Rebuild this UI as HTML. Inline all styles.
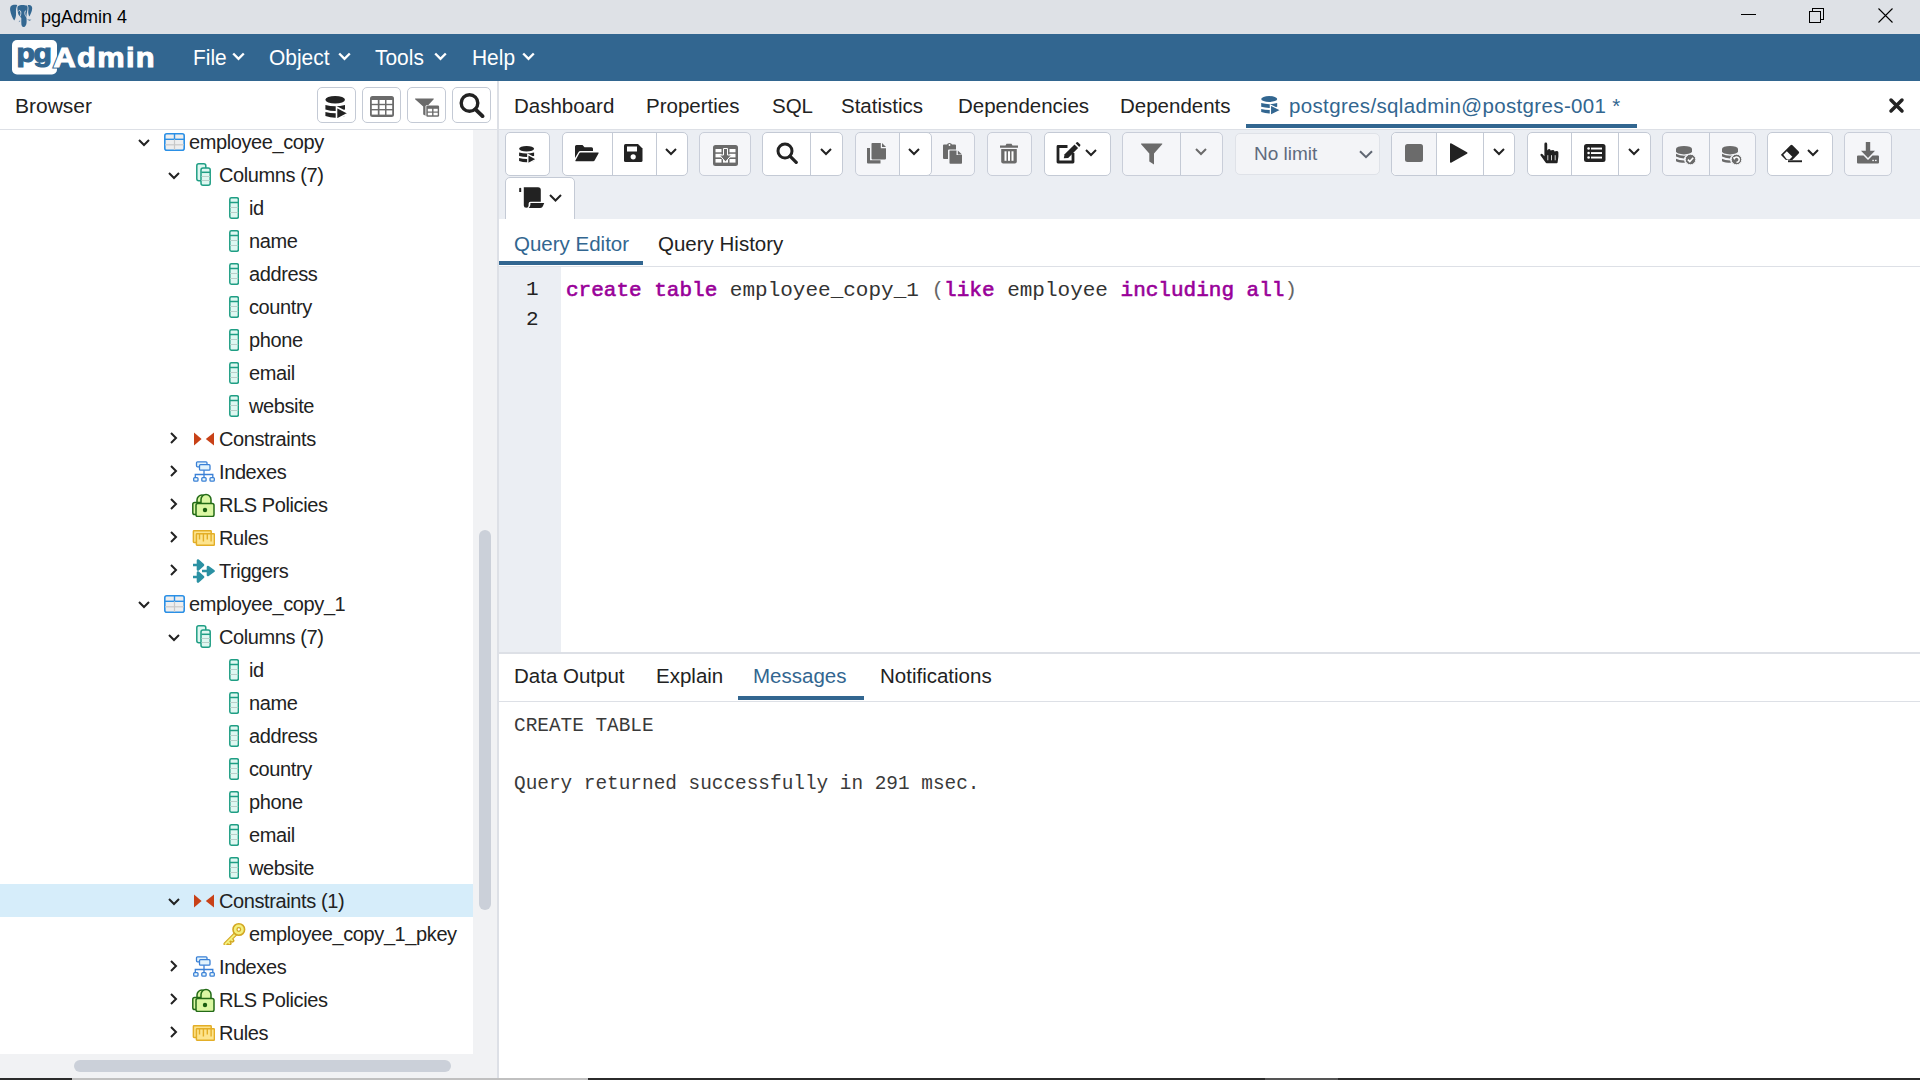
<!DOCTYPE html>
<html><head><meta charset="utf-8">
<style>
*{box-sizing:border-box;margin:0;padding:0}
html,body{width:1920px;height:1080px;overflow:hidden;background:#fff;font-family:"Liberation Sans",sans-serif;color:#222}
.a{position:absolute}
svg{display:block}
#title{left:0;top:0;width:1920px;height:34px;background:#dee1e6}
#menu{left:0;top:34px;width:1920px;height:47px;background:#326690}
.mi{top:10.5px;font-size:22.5px;color:#fff;white-space:nowrap;transform:scaleX(0.93);transform-origin:0 0}
#bhead{left:0;top:81px;width:497px;height:49px;background:#fff;border-bottom:1px solid #dde0e6}
#tree{left:0;top:130px;width:473px;height:924px;background:#fff;overflow:hidden}
#vtrack{left:473px;top:130px;width:24px;height:948px;background:#f1f2f4}
#vthumb{left:479px;top:530px;width:12px;height:380px;background:#cbd0d9;border-radius:6px}
#htrack{left:0;top:1054px;width:473px;height:24px;background:#f1f2f4}
#hthumb{left:74px;top:1060px;width:377px;height:12px;background:#cbd0d9;border-radius:6px}
#sep{left:497px;top:81px;width:2px;height:997px;background:#dde0e6}
#ptabs{left:499px;top:81px;width:1421px;height:49px;background:#fff;border-bottom:1px solid #dde0e6}
#tbar{left:499px;top:130px;width:1421px;height:89px;background:#ebeef3}
#etabs{left:499px;top:219px;width:1421px;height:48px;background:#fff;border-bottom:1px solid #dde0e6}
#gutter{left:499px;top:267px;width:62px;height:385px;background:#ebeef3}
#esplit{left:499px;top:652px;width:1421px;height:2px;background:#dde0e6}
#rtabs{left:499px;top:654px;width:1421px;height:48px;background:#fff;border-bottom:1px solid #dde0e6}
.tab{position:absolute;font-size:20.5px;white-space:nowrap;color:#222}
.btn{position:absolute;background:#fff;border:1px solid #c4cad5;border-radius:5px}
.dis{background:#f5f6f9;border-color:#c9ced9}
.dv{position:absolute;top:0;bottom:0;width:1px;background:#c4cad5}
.row{position:absolute;height:33px;white-space:nowrap;font-size:20px;color:#222;letter-spacing:-0.4px}
.bline{position:absolute;top:1078px;height:2px}
</style></head><body>
<!-- TITLE BAR -->
<div id="title" class="a">
  <svg class="a" style="left:9px;top:4px" width="24" height="24" viewBox="0 0 24 24">
    <path d="M2,2 C3.5,0.5 7,0.5 8.3,1.2 C7.3,3 6.8,5.5 7,9 C7.2,12 6.5,15 5.2,16.5 C3.5,14.5 1.8,10 1.2,6.5 C0.9,4.5 1.2,3 2,2Z" fill="#336791"/>
    <path d="M8.8,2.2 C10.5,0.6 15.5,0.6 17.8,1.6 C19,2.5 18.8,5 18,8 C17.3,10.5 17.5,13 17.6,16 C17.8,19 17.3,22.5 15,23 C13,23.3 12.3,21.5 12.3,18.5 L12.3,14 C11,12.8 9.5,11.5 9,9 C8.5,6.5 8,3.5 8.8,2.2Z" fill="#336791"/>
    <path d="M18.6,1.2 C21.5,0.5 23.3,2 23.2,4.5 C23,7.5 21.5,10.5 20.4,12.4 C19.5,11 19,9 19.3,6.5 C19.6,4.5 19.5,2.5 18.6,1.2Z" fill="#336791"/>
    <path d="M9.2,7.5 C10,6 11.5,6.2 11.8,8 C12,10 11.5,12 10.5,13 M17,6.5 C16,7 15.5,8.5 16,10.5 C16.5,12 17.3,12.5 17.5,13.5" stroke="#dee1e6" stroke-width="0.9" fill="none"/>
    <path d="M18,15.5 L22.5,15.8 L20.5,16.8Z M11.5,17 L9.5,18.3 L10.8,16.5Z" fill="#336791"/>
  </svg>
  <div class="a" style="left:41px;top:7px;font-size:18px;color:#000;white-space:nowrap">pgAdmin 4</div>
  <div class="a" style="left:1741px;top:14px;width:15px;height:1px;background:#000"></div>
  <div class="a" style="left:1812px;top:8px;width:12px;height:12px;border:1.2px solid #000;"></div>
  <div class="a" style="left:1809px;top:11px;width:12px;height:12px;border:1.2px solid #000;background:#dee1e6"></div>
  <svg class="a" style="left:1877px;top:7px" width="17" height="17" viewBox="0 0 17 17"><path d="M1.5 1.5L15.5 15.5M15.5 1.5L1.5 15.5" stroke="#000" stroke-width="1.1"/></svg>
</div>
<!-- MENU BAR -->
<div id="menu" class="a">
  <svg class="a" style="left:12px;top:5px" width="150" height="36" viewBox="0 0 150 36">
    <rect x="0" y="1" width="45" height="34.5" rx="5" fill="#fff"/>
    <text transform="translate(4.5,23) scale(1.16,1)" font-family="Liberation Sans" font-weight="700" font-size="26" fill="#336791" stroke="#336791" stroke-width="1.1" letter-spacing="-1.2">pg</text>
    <text transform="translate(41.5,27.5) scale(1.1,1)" font-family="Liberation Sans" font-weight="700" font-size="28" fill="#326690" stroke="#326690" stroke-width="3" letter-spacing="1.2">A</text>
    <text transform="translate(41.5,27.5) scale(1.1,1)" font-family="Liberation Sans" font-weight="700" font-size="28" fill="#fff" stroke="#fff" stroke-width="1" letter-spacing="1.2">Admin</text>
  </svg>
  <div class="a mi" style="left:193px">File</div>
  <div class="a mi" style="left:269px">Object</div>
  <div class="a mi" style="left:375px">Tools</div>
  <div class="a mi" style="left:472px">Help</div>
  <svg class="a" style="left:232px;top:18px" width="13" height="9" viewBox="0 0 13 9"><path d="M1.2 1.5L6.5 6.8L11.8 1.5" stroke="#fff" stroke-width="2.4" fill="none"/></svg>
  <svg class="a" style="left:338px;top:18px" width="13" height="9" viewBox="0 0 13 9"><path d="M1.2 1.5L6.5 6.8L11.8 1.5" stroke="#fff" stroke-width="2.4" fill="none"/></svg>
  <svg class="a" style="left:434px;top:18px" width="13" height="9" viewBox="0 0 13 9"><path d="M1.2 1.5L6.5 6.8L11.8 1.5" stroke="#fff" stroke-width="2.4" fill="none"/></svg>
  <svg class="a" style="left:522px;top:18px" width="13" height="9" viewBox="0 0 13 9"><path d="M1.2 1.5L6.5 6.8L11.8 1.5" stroke="#fff" stroke-width="2.4" fill="none"/></svg>
</div>
<!-- browser panel -->
<svg width="0" height="0" style="position:absolute">
  <defs>
    <symbol id="chd" viewBox="0 0 12 8"><path d="M1 1L6 6L11 1" stroke="#222" stroke-width="2" fill="none"/></symbol>
    <symbol id="chr" viewBox="0 0 8 12"><path d="M1 1L6 6L1 11" stroke="#222" stroke-width="2" fill="none"/></symbol>
    <symbol id="ictable" viewBox="0 0 21 18">
      <rect x="0.8" y="0.8" width="19.4" height="16.4" rx="2" fill="#eeeeee" stroke="#2b90e6" stroke-width="1.6"/>
      <path d="M1 6.3H20" stroke="#2b90e6" stroke-width="1.4"/>
      <path d="M1 11.8H20" stroke="#c8c8c8" stroke-width="1.2"/>
      <path d="M10.5 1V6.3" stroke="#2b90e6" stroke-width="1.4"/>
      <path d="M10.5 6.3V17" stroke="#c8c8c8" stroke-width="1.2"/>
    </symbol>
    <symbol id="iccols" viewBox="0 0 15 23">
      <rect x="0.8" y="0.8" width="9" height="17" rx="2" fill="#dff7f1" stroke="#1f9e84" stroke-width="1.5"/>
      <rect x="5" y="5" width="9.2" height="17.2" rx="2" fill="#dff7f1" stroke="#1f9e84" stroke-width="1.5"/>
      <path d="M5.5 9.3H14" stroke="#1f9e84" stroke-width="1.5"/>
      <path d="M5.5 13.5H14M5.5 17.5H14" stroke="#b8cfc9" stroke-width="1"/>
    </symbol>
    <symbol id="iccol" viewBox="0 0 10 22">
      <rect x="0.8" y="0.8" width="8.6" height="20.4" rx="1.6" fill="#dff7f1" stroke="#1f9e84" stroke-width="1.5"/>
      <path d="M1 5.5H9.2" stroke="#1f9e84" stroke-width="1.5"/>
      <path d="M1 10.5H9.2M1 15.5H9.2" stroke="#b8cfc9" stroke-width="1"/>
    </symbol>
    <symbol id="iccons" viewBox="0 0 22 14">
      <path d="M1 0.5L8.6 7L1 13.5Z" fill="#c84117"/>
      <path d="M21 0.5L12.8 7L21 13.5Z" fill="#c84117"/>
    </symbol>
    <symbol id="icidx" viewBox="0 0 22 22">
      <rect x="3.5" y="1.8" width="10.5" height="5" rx="1" fill="#e2f3fc" stroke="#3a80d6" stroke-width="1.3"/>
      <rect x="6.5" y="4.7" width="10.5" height="5.5" rx="1" fill="#e2f3fc" stroke="#3a80d6" stroke-width="1.3"/>
      <path d="M11 10.2V14.5M2.3 18V14.5H19.8V18M11 14.5V18" stroke="#3a80d6" stroke-width="1.3" fill="none"/>
      <rect x="0.7" y="17.6" width="4.3" height="3.6" rx="1" fill="#e8f8fc" stroke="#3a80d6" stroke-width="1.3"/>
      <rect x="8.8" y="17.6" width="4.3" height="3.6" rx="1" fill="#e8f8fc" stroke="#3a80d6" stroke-width="1.3"/>
      <rect x="17" y="17.6" width="4.3" height="3.6" rx="1" fill="#e8f8fc" stroke="#3a80d6" stroke-width="1.3"/>
    </symbol>
    <symbol id="icrls" viewBox="0 0 23 24">
      <path d="M5 10V7A5 5 0 0 1 15 7V10" stroke="#236b17" stroke-width="1.5" fill="#dbf7a3"/>
      <rect x="0.8" y="9.5" width="15" height="12" rx="1.8" fill="#dbf7a3" stroke="#236b17" stroke-width="1.5"/>
      <path d="M9 10V6.5A5 5 0 0 1 19 6.5V10" stroke="#236b17" stroke-width="1.5" fill="#dbf7a3"/>
      <rect x="4" y="10.5" width="18" height="13" rx="1.8" fill="#dbf7a3" stroke="#236b17" stroke-width="1.5"/>
      <circle cx="13" cy="17" r="2.2" fill="#1a5e10"/>
    </symbol>
    <symbol id="icrules" viewBox="0 0 23 16">
      <rect x="1.4" y="0.8" width="17.8" height="11.6" rx="0.6" fill="#fde48e" stroke="#e3ae27" stroke-width="1.5"/>
      <rect x="4.4" y="3.8" width="18" height="11.4" rx="0.6" fill="#fde48e" stroke="#e3ae27" stroke-width="1.5"/>
      <path d="M7.5 4V9.6M11.4 4V11.6M15.3 4V9.6M19.1 4V11.6" stroke="#e3ae27" stroke-width="1.4"/>
    </symbol>
    <symbol id="ictrig" viewBox="0 0 23 24">
      <path d="M1 6H8M6 1.5L11 6L6 10.5Z" stroke="#2b91a3" stroke-width="2.6" fill="#2b91a3" stroke-linejoin="round"/>
      <path d="M1 18H8M6 13.5L11 18L6 22.5Z" stroke="#2b91a3" stroke-width="2.6" fill="#2b91a3" stroke-linejoin="round"/>
      <path d="M10 12H17M16 8L21.5 12L16 16Z" stroke="#2b91a3" stroke-width="2.6" fill="#2b91a3" stroke-linejoin="round"/>
    </symbol>
    <symbol id="ickey" viewBox="0 0 24 24">
      <path d="M13 13.5L3.5 23 M5.8 20.7L7.6 22.5 M8.6 17.9L10.4 19.7" stroke="#d3a722" stroke-width="4" stroke-linecap="round" fill="none"/>
      <path d="M13 13.5L3.5 23 M5.8 20.7L7.3 22.2 M8.6 17.9L10.1 19.4" stroke="#f3ef7c" stroke-width="1.8" stroke-linecap="round" fill="none"/>
      <circle cx="16.8" cy="8.5" r="5.8" fill="#f3ef7c" stroke="#d3a722" stroke-width="1.6"/>
      <circle cx="16.8" cy="8.5" r="1.8" fill="#fff" stroke="#d3a722" stroke-width="1.3"/>
    </symbol>
  </defs>
</svg>
<div id="bhead" class="a">
  <div class="a" style="left:15px;top:13px;font-size:21px;color:#222">Browser</div>
</div>
<div class="btn" style="left:317px;top:87px;width:39px;height:36px"></div>
<div class="btn" style="left:362px;top:87px;width:39px;height:36px"></div>
<div class="btn" style="left:407px;top:87px;width:39px;height:36px"></div>
<div class="btn" style="left:452px;top:87px;width:39px;height:36px"></div>
<svg class="a" style="left:325px;top:96px" width="24" height="24" viewBox="0 0 24 24">
  <ellipse cx="10.2" cy="3.8" rx="9.8" ry="3.8" fill="#222"/>
  <path d="M0.4 8.9 Q10.2 11.6 20 8.9 V13.4 Q10.2 16.4 0.4 13.4Z" fill="#222"/>
  <path d="M0.4 15.9 Q10.2 18.6 20 15.9 V20 Q10.2 23.5 0.4 20Z" fill="#222"/>
  <path d="M11.5 11 L23.4 17.2 L11.5 23.4Z" fill="#222" stroke="#fff" stroke-width="1.6"/>
</svg>
<svg class="a" style="left:370px;top:96px" width="24" height="21" viewBox="0 0 24 21">
  <rect x="0" y="0" width="24" height="21" rx="2.5" fill="#6b6b6b"/>
  <rect x="1.8" y="4" width="6" height="3.8" fill="#fff"/><rect x="9.5" y="4" width="5.5" height="3.8" fill="#fff"/><rect x="16.5" y="4" width="5.7" height="3.8" fill="#fff"/>
  <rect x="1.8" y="9.2" width="6" height="3.8" fill="#fff"/><rect x="9.5" y="9.2" width="5.5" height="3.8" fill="#fff"/><rect x="16.5" y="9.2" width="5.7" height="3.8" fill="#fff"/>
  <rect x="1.8" y="14.4" width="6" height="4.2" fill="#fff"/><rect x="9.5" y="14.4" width="5.5" height="4.2" fill="#fff"/><rect x="16.5" y="14.4" width="5.7" height="4.2" fill="#fff"/>
</svg>
<svg class="a" style="left:415px;top:98px" width="25" height="20" viewBox="0 0 25 20">
  <path d="M0.3 0.5 H18.5 Q19 0.5 18.7 1.2 L12 8.5 V18.5 L8.2 16.5 V8.5 L0.1 1.2 Q-0.2 0.5 0.3 0.5Z" fill="#6b6b6b"/>
  <rect x="10.5" y="7" width="14" height="12" rx="1.5" fill="#fff"/>
  <rect x="11.3" y="7.5" width="12.8" height="11.3" rx="1.3" fill="#6b6b6b"/>
  <rect x="12.8" y="10.8" width="4.3" height="2.7" fill="#fff"/><rect x="18.5" y="10.8" width="4.2" height="2.7" fill="#fff"/>
  <rect x="12.8" y="14.7" width="4.3" height="2.6" fill="#fff"/><rect x="18.5" y="14.7" width="4.2" height="2.6" fill="#fff"/>
</svg>
<svg class="a" style="left:459px;top:93px" width="26" height="25" viewBox="0 0 26 25">
  <circle cx="10.5" cy="10" r="8.3" stroke="#222" stroke-width="3.4" fill="none"/>
  <path d="M16.5 16.3 L23.5 23.2" stroke="#222" stroke-width="3.8" stroke-linecap="round"/>
</svg>
<div id="tree" class="a">
<div class="row" style="top:-5px;left:0;width:473px">
<svg class="a" style="left:138px;top:14px" width="12" height="8"><use href="#chd"/></svg>
<svg class="a" style="left:164px;top:8px" width="21" height="18"><use href="#ictable"/></svg>
<span class="a" style="left:189px;top:6px">employee_copy</span>
</div>
<div class="row" style="top:28px;left:0;width:473px">
<svg class="a" style="left:168px;top:14px" width="12" height="8"><use href="#chd"/></svg>
<svg class="a" style="left:196px;top:5px" width="15" height="23"><use href="#iccols"/></svg>
<span class="a" style="left:219px;top:6px">Columns (7)</span>
</div>
<div class="row" style="top:61px;left:0;width:473px">
<svg class="a" style="left:229px;top:6px" width="10" height="22"><use href="#iccol"/></svg>
<span class="a" style="left:249px;top:6px">id</span>
</div>
<div class="row" style="top:94px;left:0;width:473px">
<svg class="a" style="left:229px;top:6px" width="10" height="22"><use href="#iccol"/></svg>
<span class="a" style="left:249px;top:6px">name</span>
</div>
<div class="row" style="top:127px;left:0;width:473px">
<svg class="a" style="left:229px;top:6px" width="10" height="22"><use href="#iccol"/></svg>
<span class="a" style="left:249px;top:6px">address</span>
</div>
<div class="row" style="top:160px;left:0;width:473px">
<svg class="a" style="left:229px;top:6px" width="10" height="22"><use href="#iccol"/></svg>
<span class="a" style="left:249px;top:6px">country</span>
</div>
<div class="row" style="top:193px;left:0;width:473px">
<svg class="a" style="left:229px;top:6px" width="10" height="22"><use href="#iccol"/></svg>
<span class="a" style="left:249px;top:6px">phone</span>
</div>
<div class="row" style="top:226px;left:0;width:473px">
<svg class="a" style="left:229px;top:6px" width="10" height="22"><use href="#iccol"/></svg>
<span class="a" style="left:249px;top:6px">email</span>
</div>
<div class="row" style="top:259px;left:0;width:473px">
<svg class="a" style="left:229px;top:6px" width="10" height="22"><use href="#iccol"/></svg>
<span class="a" style="left:249px;top:6px">website</span>
</div>
<div class="row" style="top:292px;left:0;width:473px">
<svg class="a" style="left:170px;top:10px" width="8" height="12"><use href="#chr"/></svg>
<svg class="a" style="left:193px;top:10px" width="22" height="14"><use href="#iccons"/></svg>
<span class="a" style="left:219px;top:6px">Constraints</span>
</div>
<div class="row" style="top:325px;left:0;width:473px">
<svg class="a" style="left:170px;top:10px" width="8" height="12"><use href="#chr"/></svg>
<svg class="a" style="left:193px;top:5px" width="22" height="22"><use href="#icidx"/></svg>
<span class="a" style="left:219px;top:6px">Indexes</span>
</div>
<div class="row" style="top:358px;left:0;width:473px">
<svg class="a" style="left:170px;top:10px" width="8" height="12"><use href="#chr"/></svg>
<svg class="a" style="left:192px;top:5px" width="23" height="24"><use href="#icrls"/></svg>
<span class="a" style="left:219px;top:6px">RLS Policies</span>
</div>
<div class="row" style="top:391px;left:0;width:473px">
<svg class="a" style="left:170px;top:10px" width="8" height="12"><use href="#chr"/></svg>
<svg class="a" style="left:192px;top:9px" width="23" height="16"><use href="#icrules"/></svg>
<span class="a" style="left:219px;top:6px">Rules</span>
</div>
<div class="row" style="top:424px;left:0;width:473px">
<svg class="a" style="left:170px;top:10px" width="8" height="12"><use href="#chr"/></svg>
<svg class="a" style="left:192px;top:5px" width="23" height="24"><use href="#ictrig"/></svg>
<span class="a" style="left:219px;top:6px">Triggers</span>
</div>
<div class="row" style="top:457px;left:0;width:473px">
<svg class="a" style="left:138px;top:14px" width="12" height="8"><use href="#chd"/></svg>
<svg class="a" style="left:164px;top:8px" width="21" height="18"><use href="#ictable"/></svg>
<span class="a" style="left:189px;top:6px">employee_copy_1</span>
</div>
<div class="row" style="top:490px;left:0;width:473px">
<svg class="a" style="left:168px;top:14px" width="12" height="8"><use href="#chd"/></svg>
<svg class="a" style="left:196px;top:5px" width="15" height="23"><use href="#iccols"/></svg>
<span class="a" style="left:219px;top:6px">Columns (7)</span>
</div>
<div class="row" style="top:523px;left:0;width:473px">
<svg class="a" style="left:229px;top:6px" width="10" height="22"><use href="#iccol"/></svg>
<span class="a" style="left:249px;top:6px">id</span>
</div>
<div class="row" style="top:556px;left:0;width:473px">
<svg class="a" style="left:229px;top:6px" width="10" height="22"><use href="#iccol"/></svg>
<span class="a" style="left:249px;top:6px">name</span>
</div>
<div class="row" style="top:589px;left:0;width:473px">
<svg class="a" style="left:229px;top:6px" width="10" height="22"><use href="#iccol"/></svg>
<span class="a" style="left:249px;top:6px">address</span>
</div>
<div class="row" style="top:622px;left:0;width:473px">
<svg class="a" style="left:229px;top:6px" width="10" height="22"><use href="#iccol"/></svg>
<span class="a" style="left:249px;top:6px">country</span>
</div>
<div class="row" style="top:655px;left:0;width:473px">
<svg class="a" style="left:229px;top:6px" width="10" height="22"><use href="#iccol"/></svg>
<span class="a" style="left:249px;top:6px">phone</span>
</div>
<div class="row" style="top:688px;left:0;width:473px">
<svg class="a" style="left:229px;top:6px" width="10" height="22"><use href="#iccol"/></svg>
<span class="a" style="left:249px;top:6px">email</span>
</div>
<div class="row" style="top:721px;left:0;width:473px">
<svg class="a" style="left:229px;top:6px" width="10" height="22"><use href="#iccol"/></svg>
<span class="a" style="left:249px;top:6px">website</span>
</div>
<div class="row" style="top:754px;left:0;width:473px;background:#d6edfa">
<svg class="a" style="left:168px;top:14px" width="12" height="8"><use href="#chd"/></svg>
<svg class="a" style="left:193px;top:10px" width="22" height="14"><use href="#iccons"/></svg>
<span class="a" style="left:219px;top:6px">Constraints (1)</span>
</div>
<div class="row" style="top:787px;left:0;width:473px">
<svg class="a" style="left:222px;top:4px" width="24" height="24"><use href="#ickey"/></svg>
<span class="a" style="left:249px;top:6px">employee_copy_1_pkey</span>
</div>
<div class="row" style="top:820px;left:0;width:473px">
<svg class="a" style="left:170px;top:10px" width="8" height="12"><use href="#chr"/></svg>
<svg class="a" style="left:193px;top:5px" width="22" height="22"><use href="#icidx"/></svg>
<span class="a" style="left:219px;top:6px">Indexes</span>
</div>
<div class="row" style="top:853px;left:0;width:473px">
<svg class="a" style="left:170px;top:10px" width="8" height="12"><use href="#chr"/></svg>
<svg class="a" style="left:192px;top:5px" width="23" height="24"><use href="#icrls"/></svg>
<span class="a" style="left:219px;top:6px">RLS Policies</span>
</div>
<div class="row" style="top:886px;left:0;width:473px">
<svg class="a" style="left:170px;top:10px" width="8" height="12"><use href="#chr"/></svg>
<svg class="a" style="left:192px;top:9px" width="23" height="16"><use href="#icrules"/></svg>
<span class="a" style="left:219px;top:6px">Rules</span>
</div>
</div>
<div id="vtrack" class="a"></div>
<div id="vthumb" class="a"></div>
<div id="htrack" class="a"></div>
<div id="hthumb" class="a"></div>
<div id="sep" class="a"></div>
<!-- RIGHT TABS -->
<div id="ptabs" class="a">
  <div class="tab" style="left:15px;top:13px">Dashboard</div>
  <div class="tab" style="left:147px;top:13px">Properties</div>
  <div class="tab" style="left:273px;top:13px">SQL</div>
  <div class="tab" style="left:342px;top:13px">Statistics</div>
  <div class="tab" style="left:459px;top:13px">Dependencies</div>
  <div class="tab" style="left:621px;top:13px">Dependents</div>
  <svg class="a" style="left:762px;top:15px" width="21" height="20" viewBox="0 0 21 20">
    <ellipse cx="8.2" cy="3" rx="8" ry="3" fill="#326690"/>
    <path d="M0.2 7.1 Q8.2 9.2 16.2 7.1 V10.8 Q8.2 13.1 0.2 10.8Z" fill="#326690"/>
    <path d="M0.2 12.9 Q8.2 15 16.2 12.9 V16.1 Q8.2 18.9 0.2 16.1Z" fill="#326690"/>
    <path d="M9.4 9 L20 14.2 L9.4 19.4Z" fill="#326690" stroke="#fff" stroke-width="1.3"/>
  </svg>
  <div class="tab" style="left:790px;top:13px;color:#326690;letter-spacing:0.35px">postgres/sqladmin@postgres-001 *</div>
  <div class="a" style="left:747px;top:43px;width:391px;height:4px;background:#326690"></div>
  <svg class="a" style="left:1389px;top:15.5px" width="17" height="17" viewBox="0 0 17 17"><path d="M3 3L14 14M14 3L3 14" stroke="#222" stroke-width="3.5" stroke-linecap="round"/></svg>
</div>
<div id="tbar" class="a"></div>
<!-- toolbar buttons (page coords) -->
<div class="btn" style="left:505px;top:132px;width:45px;height:44px"></div>
<div class="btn" style="left:562px;top:132px;width:126px;height:44px"><div class="dv" style="left:49px"></div><div class="dv" style="left:93px"></div></div>
<div class="btn dis" style="left:699px;top:132px;width:52px;height:44px"></div>
<div class="btn" style="left:762px;top:132px;width:81px;height:44px"><div class="dv" style="left:47px"></div></div>
<div class="btn dis" style="left:855px;top:132px;width:120px;height:44px"><div class="a" style="left:43px;top:-1px;width:33px;height:44px;background:#fff;border:1px solid #c4cad5;border-radius:0 5px 5px 0"></div></div>
<div class="btn dis" style="left:987px;top:132px;width:45px;height:44px"></div>
<div class="btn" style="left:1044px;top:132px;width:67px;height:44px"></div>
<div class="btn dis" style="left:1122px;top:132px;width:101px;height:44px"><div class="dv" style="left:57px"></div></div>
<div class="btn dis" style="left:1235px;top:133px;width:145px;height:42px;background:#f3f4f7;border-color:#dfe2e8"></div>
<div class="a" style="left:1254px;top:142.5px;font-size:19px;color:#5f6b7e;white-space:nowrap">No limit</div>
<div class="btn" style="left:1391px;top:132px;width:124px;height:44px"><div class="a" style="left:0;top:0;width:44px;height:42px;background:#f4f5f8;border-radius:5px 0 0 5px"></div><div class="dv" style="left:44px"></div><div class="dv" style="left:91px"></div></div>
<div class="btn" style="left:1527px;top:132px;width:124px;height:44px"><div class="dv" style="left:43px"></div><div class="dv" style="left:90px"></div></div>
<div class="btn dis" style="left:1662px;top:132px;width:94px;height:44px"><div class="dv" style="left:46px"></div></div>
<div class="btn" style="left:1767px;top:132px;width:66px;height:44px"></div>
<div class="btn dis" style="left:1844px;top:132px;width:48px;height:44px"></div>
<div class="btn" style="left:505px;top:177px;width:70px;height:50px"></div>
<svg class="a" style="left:519px;top:146px" width="18" height="18" viewBox="0 0 18 18">
  <ellipse cx="7.6" cy="2.8" rx="7.5" ry="2.8" fill="#222"/>
  <path d="M0.1 6.6 Q7.6 8.6 15.1 6.6 V10 Q7.6 12.2 0.1 10Z" fill="#222"/>
  <path d="M0.1 12 Q7.6 14 15.1 12 V15 Q7.6 17.6 0.1 15Z" fill="#222"/>
  <path d="M8.8 8.4 L17.6 13.1 L8.8 17.8Z" fill="#222" stroke="#fff" stroke-width="1.3" stroke-linejoin="miter"/>
</svg>
<svg class="a" style="left:575px;top:145px" width="24" height="17" viewBox="0 0 24 17">
  <path d="M0 1.5 Q0 0 1.5 0 H7.5 L9.5 2.2 H16.5 Q18 2.2 18 3.7 V6 H5.3 Q4.2 6 3.6 7 L0 13Z" fill="#222"/>
  <path d="M5.5 7.5 H23.2 Q24 7.5 23.6 8.3 L19.6 15.5 Q19.2 16.3 18.3 16.3 H0.8 Q0 16.3 0.4 15.5 L4.3 8.3 Q4.7 7.5 5.5 7.5Z" fill="#222"/>
</svg>
<svg class="a" style="left:624px;top:144px" width="19" height="18" viewBox="0 0 19 18">
  <path d="M0 1.5 Q0 0 1.5 0 H14 L18.5 4.5 V16.5 Q18.5 18 17 18 H1.5 Q0 18 0 16.5Z" fill="#222"/>
  <rect x="3" y="2.5" width="10" height="5" fill="#fff"/>
  <circle cx="9.2" cy="12.8" r="2.6" fill="#fff"/>
</svg>
<svg class="a" style="left:665px;top:148px" width="12" height="8" viewBox="0 0 12 8"><path d="M1 1L6 6L11 1" stroke="#222" stroke-width="2" fill="none"/></svg>
<svg class="a" style="left:713px;top:145px" width="25" height="21" viewBox="0 0 25 21">
  <rect x="0" y="0" width="25" height="21" rx="2.5" fill="#6b6b6b"/>
  <rect x="2.5" y="4" width="6" height="3.3" fill="#fff"/><rect x="10" y="4" width="5" height="3.3" fill="#fff"/><rect x="16.5" y="4" width="6" height="3.3" fill="#fff"/>
  <rect x="2.5" y="8.8" width="6" height="3.6" fill="#fff"/><rect x="10" y="8.8" width="5" height="3.6" fill="#fff"/><rect x="16.5" y="8.8" width="6" height="3.6" fill="#fff"/>
  <rect x="2.5" y="14" width="6" height="3.6" fill="#fff"/><rect x="10" y="14" width="5" height="3.6" fill="#fff"/><rect x="16.5" y="14" width="6" height="3.6" fill="#fff"/>
  <path d="M10.5 3.5 H14.5 V10 H18.5 L12.5 17 L6.5 10 H10.5Z" fill="#6b6b6b" stroke="#fff" stroke-width="1"/>
</svg>
<svg class="a" style="left:776px;top:142px" width="22" height="22" viewBox="0 0 22 22">
  <circle cx="9" cy="9" r="7" stroke="#222" stroke-width="3" fill="none"/>
  <path d="M14 14.2 L20.2 20.4" stroke="#222" stroke-width="3.3" stroke-linecap="round"/>
</svg>
<svg class="a" style="left:820px;top:148px" width="12" height="8" viewBox="0 0 12 8"><path d="M1 1L6 6L11 1" stroke="#222" stroke-width="2" fill="none"/></svg>
<svg class="a" style="left:867px;top:143px" width="19" height="21" viewBox="0 0 19 21">
  <path d="M0 5 H3 V17.3 H13.5 V20.5 H1 Q0 20.5 0 19.5Z" fill="#6b6b6b"/>
  <path d="M4.5 0.8 Q4.5 0 5.3 0 H13.8 V5.2 H19 V15.6 Q19 16.4 18.2 16.4 H5.3 Q4.5 16.4 4.5 15.6Z" fill="#6b6b6b"/>
  <path d="M15 0 L19 4 H15Z" fill="#6b6b6b"/>
</svg>
<svg class="a" style="left:908px;top:148px" width="12" height="8" viewBox="0 0 12 8"><path d="M1 1L6 6L11 1" stroke="#222" stroke-width="2" fill="none"/></svg>
<svg class="a" style="left:943px;top:143px" width="19" height="21" viewBox="0 0 19 21">
  <path d="M0 2.5 Q0 1.5 1 1.5 H4 Q4.5 0 6.5 0 Q8.5 0 9 1.5 H12 Q13 1.5 13 2.5 V6.5 H6 Q5 6.5 5 7.5 V16 H1 Q0 16 0 15Z" fill="#6b6b6b"/>
  <circle cx="6.5" cy="2" r="0.9" fill="#fff"/>
  <path d="M6.5 8 Q6.5 7.5 7 7.5 H13.5 V12 H19 V20 Q19 20.8 18.2 20.8 H7.3 Q6.5 20.8 6.5 20Z" fill="#6b6b6b"/>
  <path d="M14.8 7.5 L19 11.5 H14.8Z" fill="#6b6b6b"/>
</svg>
<svg class="a" style="left:1000px;top:143px" width="18" height="21" viewBox="0 0 18 21">
  <path d="M0 2.5 H5.5 L6.5 0.8 H11.5 L12.5 2.5 H18 V4.7 H0Z" fill="#6b6b6b"/>
  <path d="M1.2 6 H16.8 V18.5 Q16.8 20.5 14.8 20.5 H3.2 Q1.2 20.5 1.2 18.5Z" fill="#6b6b6b"/>
  <rect x="4.5" y="8.3" width="2" height="9.5" fill="#fff"/><rect x="8" y="8.3" width="2" height="9.5" fill="#fff"/><rect x="11.5" y="8.3" width="2" height="9.5" fill="#fff"/>
</svg>
<svg class="a" style="left:1056px;top:142px" width="25" height="22" viewBox="0 0 25 22">
  <path d="M11.5 4.5 H2 V20 H17 V11" stroke="#222" stroke-width="2.8" fill="none" stroke-linejoin="round"/>
  <path d="M7.8 16.3 L8.6 12.3 L18.5 2.4 L22.1 6 L12.2 15.9Z" fill="#222"/>
  <path d="M19.6 1.3 L20.8 0.3 Q21.5 -0.2 22.2 0.4 L24.2 2.4 Q24.7 3.1 24.2 3.7 L23.2 4.9Z" fill="#222"/>
</svg>
<svg class="a" style="left:1085px;top:149px" width="12" height="8" viewBox="0 0 12 8"><path d="M1 1L6 6L11 1" stroke="#222" stroke-width="2" fill="none"/></svg>
<svg class="a" style="left:1141px;top:143px" width="22" height="22" viewBox="0 0 22 22">
  <path d="M0.3 0.5 H21 Q21.5 0.5 21.2 1.3 L13 10.5 V21.5 L8.3 18.5 V10.5 L0.1 1.3 Q-0.2 0.5 0.3 0.5Z" fill="#6b6b6b"/>
</svg>
<svg class="a" style="left:1195px;top:148px" width="12" height="8" viewBox="0 0 12 8"><path d="M1 1L6 6L11 1" stroke="#6b6b6b" stroke-width="2" fill="none"/></svg>
<svg class="a" style="left:1359px;top:150px" width="14" height="9" viewBox="0 0 14 9"><path d="M1 1.2L7 7.2L13 1.2" stroke="#5f6672" stroke-width="2" fill="none"/></svg>
<svg class="a" style="left:1405px;top:144px" width="18" height="18" viewBox="0 0 18 18"><rect x="0" y="0" width="18" height="18" rx="2.5" fill="#6b6b6b"/></svg>
<svg class="a" style="left:1449px;top:142px" width="20" height="22" viewBox="0 0 20 22">
  <path d="M2.5 1.5 Q1 0.6 1 2.3 V19.7 Q1 21.4 2.5 20.5 L18 11.8 Q19.3 11 18 10.2Z" fill="#222"/>
</svg>
<svg class="a" style="left:1493px;top:148px" width="12" height="8" viewBox="0 0 12 8"><path d="M1 1L6 6L11 1" stroke="#222" stroke-width="2" fill="none"/></svg>
<svg class="a" style="left:1540px;top:142px" width="19" height="22" viewBox="0 0 19 22">
  <path d="M4.4 2 Q4.4 0.6 5.8 0.6 Q7.2 0.6 7.2 2 V8.5 Q7.6 7 9.2 7 Q10.6 7 10.6 8.5 Q11 8 13.2 8 Q14.5 8 14.5 9.5 Q15 9 17 9 Q18.4 9 18.4 10.5 V14.5 L17.6 20.5 Q17.4 21.2 16.7 21.2 H6.7 Q6 21.2 5.6 20.5 L0.6 13.6 Q0 12.6 0.9 12 Q1.8 11.5 2.6 12.3 L4.4 14.3Z" fill="#222"/>
  <path d="M7.8 13.2 V18.3 M11.5 13.2 V18.3 M15.2 13.2 V18.3" stroke="#fff" stroke-width="0.8"/>
</svg>
<svg class="a" style="left:1584px;top:144px" width="22" height="18" viewBox="0 0 22 18">
  <rect x="0" y="0" width="21.5" height="18" rx="2.5" fill="#222"/>
  <circle cx="4.6" cy="4.5" r="1.3" fill="#fff"/><circle cx="4.6" cy="9" r="1.3" fill="#fff"/><circle cx="4.6" cy="13.5" r="1.3" fill="#fff"/>
  <rect x="7" y="3.6" width="11" height="1.9" fill="#fff"/><rect x="7" y="8.1" width="11" height="1.9" fill="#fff"/><rect x="7" y="12.6" width="11" height="1.9" fill="#fff"/>
</svg>
<svg class="a" style="left:1628px;top:148px" width="12" height="8" viewBox="0 0 12 8"><path d="M1 1L6 6L11 1" stroke="#222" stroke-width="2" fill="none"/></svg>
<svg class="a" style="left:1676px;top:146px" width="20" height="19" viewBox="0 0 20 19">
  <path d="M0 2.8 A8 2.8 0 0 1 16 2.8 V5.6 A8 2.8 0 0 1 0 5.6Z" fill="#6b6b6b"/>
  <path d="M0 7.8 Q4 10 10 9.6 Q8 11 8 12.5 Q3 12.3 0 10.6Z" fill="#6b6b6b"/>
  <path d="M0 12.8 Q3 14.6 8.2 14.6 Q8.4 16 9 16.8 Q3 16.8 0 15.2Z" fill="#6b6b6b"/>
  <circle cx="14.5" cy="13.5" r="5.3" fill="#6b6b6b" stroke="#f4f5f8" stroke-width="1"/>
  <path d="M11.9 13.6 L13.8 15.5 L17.2 11.8" stroke="#fff" stroke-width="1.6" fill="none"/>
</svg>
<svg class="a" style="left:1722px;top:146px" width="20" height="19" viewBox="0 0 20 19">
  <path d="M0 2.8 A8 2.8 0 0 1 16 2.8 V5.6 A8 2.8 0 0 1 0 5.6Z" fill="#6b6b6b"/>
  <path d="M0 7.8 Q4 10 10 9.6 Q8 11 8 12.5 Q3 12.3 0 10.6Z" fill="#6b6b6b"/>
  <path d="M0 12.8 Q3 14.6 8.2 14.6 Q8.4 16 9 16.8 Q3 16.8 0 15.2Z" fill="#6b6b6b"/>
  <circle cx="14.5" cy="13.5" r="5.3" fill="#6b6b6b" stroke="#f4f5f8" stroke-width="1"/>
  <path d="M12.3 12.5 A2.6 2.6 0 1 1 14.5 16.3" stroke="#fff" stroke-width="1.5" fill="none"/>
  <path d="M10.8 11.2 L13.9 11.2 L12.3 14Z" fill="#fff"/>
</svg>
<svg class="a" style="left:1780px;top:144px" width="23" height="19" viewBox="0 0 23 19">
  <path d="M1 10.8 L10.5 1.3 Q11.5 0.3 12.5 1.3 L18.7 7.5 Q19.7 8.5 18.7 9.5 L12.3 15.9 H6 L1 10.9Z" fill="#222"/>
  <path d="M3.3 10.8 L6.8 7.3 L12.3 12.8 L9.5 15.6 H6.9Z" fill="#fff"/>
  <rect x="8" y="16.3" width="14" height="1.9" fill="#222"/>
</svg>
<svg class="a" style="left:1807px;top:149px" width="12" height="8" viewBox="0 0 12 8"><path d="M1 1L6 6L11 1" stroke="#222" stroke-width="2" fill="none"/></svg>
<svg class="a" style="left:1857px;top:142px" width="22" height="22" viewBox="0 0 22 22">
  <path d="M8.8 0 H13.2 V8.8 H18 L11 16 L4 8.8 H8.8Z" fill="#6b6b6b"/>
  <path d="M0 14.5 Q0 13.5 1 13.5 H6.5 L11 18 L15.5 13.5 H21 Q22 13.5 22 14.5 V20.5 Q22 21.5 21 21.5 H1 Q0 21.5 0 20.5Z" fill="#6b6b6b"/>
  <rect x="15.3" y="17.8" width="1.6" height="1.3" fill="#f4f5f8"/><rect x="18" y="17.8" width="1.6" height="1.3" fill="#f4f5f8"/>
</svg>
<svg class="a" style="left:518px;top:187px" width="28" height="22" viewBox="0 0 28 22">
  <path d="M1.2 1.2 Q2.2 0.3 3.2 1.2 V5 H1.2Z" fill="#222"/>
  <path d="M5.8 0.3 H20 Q22.8 0.3 22.8 3.1 V14.8 H12.5 Q10.6 14.8 10.6 16.8 V18.4 Q10.6 20.8 8.3 20.8 Q5.8 20.8 5.8 18.4Z" fill="#222"/>
  <path d="M12.4 16 H26.2 L25 18.9 Q24.3 21 22.2 21 H10.7 Q12.4 19.5 12.4 17.6Z" fill="#222"/>
</svg>
<svg class="a" style="left:549px;top:194px" width="13" height="8" viewBox="0 0 13 8"><path d="M1 1L6.5 6.5L12 1" stroke="#222" stroke-width="2" fill="none"/></svg>

<div id="etabs" class="a">
  <div class="tab" style="left:15px;top:12.5px;color:#326690">Query Editor</div>
  <div class="tab" style="left:159px;top:12.5px">Query History</div>
  <div class="a" style="left:0;top:42px;width:144px;height:4px;background:#326690"></div>
</div>
<div id="gutter" class="a"></div>
<div class="a" style="left:499px;top:267px;width:1421px;height:385px;font-family:'Liberation Mono',monospace;font-size:21px;line-height:30px">
  <div class="a" style="left:27px;top:8px;color:#222">1</div>
  <div class="a" style="left:27px;top:38px;color:#222">2</div>
  <div class="a" style="left:67px;top:9px;white-space:pre;color:#333"><b style="color:#990099;font-weight:normal;-webkit-text-stroke:0.6px #990099">create</b> <b style="color:#990099;font-weight:normal;-webkit-text-stroke:0.6px #990099">table</b> employee_copy_1 <span style="color:#666">(</span><b style="color:#990099;font-weight:normal;-webkit-text-stroke:0.6px #990099">like</b> employee <b style="color:#990099;font-weight:normal;-webkit-text-stroke:0.6px #990099">including</b> <b style="color:#990099;font-weight:normal;-webkit-text-stroke:0.6px #990099">all</b><span style="color:#666">)</span></div>
</div>
<div id="esplit" class="a"></div>
<div id="rtabs" class="a">
  <div class="tab" style="left:15px;top:10px">Data Output</div>
  <div class="tab" style="left:157px;top:10px">Explain</div>
  <div class="tab" style="left:254px;top:10px;color:#326690">Messages</div>
  <div class="tab" style="left:381px;top:10px">Notifications</div>
  <div class="a" style="left:239px;top:42px;width:126px;height:4px;background:#326690"></div>
</div>
<div class="a" style="left:514px;top:712px;font-family:'Liberation Mono',monospace;font-size:19.4px;line-height:29px;white-space:pre;color:#3a3a3a">CREATE TABLE

Query returned successfully in 291 msec.</div>
<!-- bottom strip -->
<div class="bline" style="left:0;width:72px;background:#2b2b2b"></div>
<div class="bline" style="left:72px;width:516px;background:#c0c0c0"></div>
<div class="bline" style="left:588px;width:677px;background:#2b2b2b"></div>
<div class="bline" style="left:1265px;width:73px;background:#555"></div>
<div class="bline" style="left:1338px;width:582px;background:#2b2b2b"></div>
</body></html>
